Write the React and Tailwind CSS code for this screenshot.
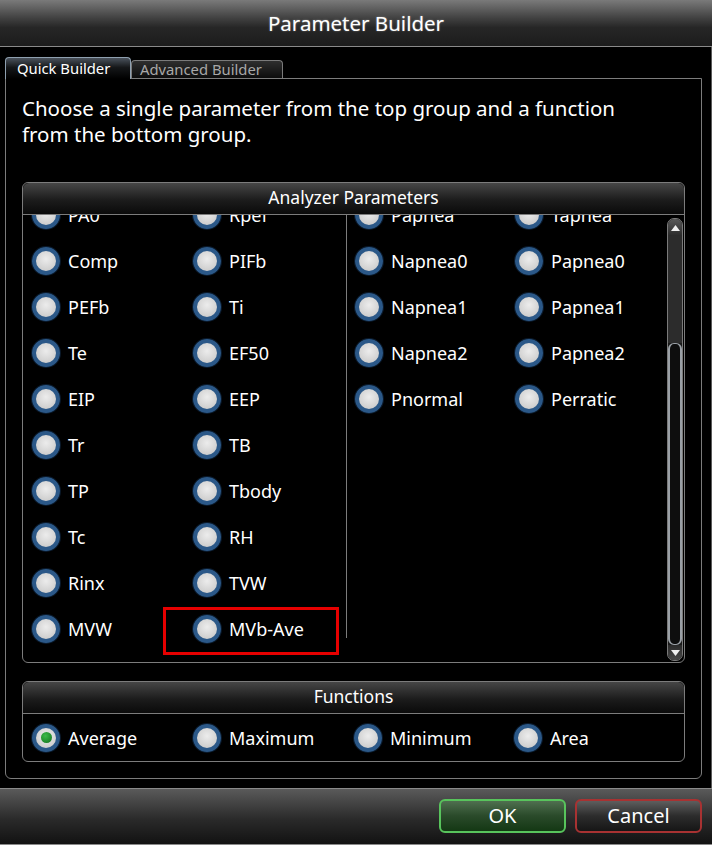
import React from "react";

const leftRows = [
  ["PA0", "Rpef"],
  ["Comp", "PIFb"],
  ["PEFb", "Ti"],
  ["Te", "EF50"],
  ["EIP", "EEP"],
  ["Tr", "TB"],
  ["TP", "Tbody"],
  ["Tc", "RH"],
  ["Rinx", "TVW"],
  ["MVW", "MVb-Ave"],
];

const rightRows = [
  ["Papnea", "Tapnea"],
  ["Napnea0", "Papnea0"],
  ["Napnea1", "Papnea1"],
  ["Napnea2", "Papnea2"],
  ["Pnormal", "Perratic"],
];

function Radio({ checked }) {
  return (
    <span className="w-[28px] h-[28px] shrink-0 rounded-full border-[4px] border-[#2b5888] bg-[radial-gradient(circle_at_50%_40%,#ececec,#c4c4c4)] shadow-[0_0_0_1px_#0a1a2c] flex items-center justify-center">
      {checked && <span className="w-[11px] h-[11px] rounded-full bg-[radial-gradient(circle_at_40%_35%,#3dbb4a,#10701c)]" />}
    </span>
  );
}

function Item({ label, checked, w = "w-[161px]" }) {
  return (
    <div className={`flex items-center gap-[8px] h-[46px] ${w} shrink-0`}>
      <Radio checked={checked} />
      <span className="text-[18px] leading-none text-white whitespace-nowrap">{label}</span>
    </div>
  );
}

function GroupHeader({ children }) {
  return (
    <div className="h-[32px] shrink-0 flex items-center justify-center pb-[2px] border-b border-[#7c7c7c] bg-[linear-gradient(to_bottom,#464646,#1c1c1c_55%,#0a0a0a)] rounded-t-[6px] text-[17.5px] text-white">
      {children}
    </div>
  );
}

function ScrollBar() {
  return (
    <div className="w-[16px] mt-[3px] mb-[1px] mr-px shrink-0 rounded-[7px] border border-[#7a7a7a] bg-[#1a1a1a] flex flex-col overflow-hidden">
      <div className="h-[17px] shrink-0 flex items-center justify-center bg-[linear-gradient(to_bottom,#5a5a5a,#2a2a2a)]">
        <svg width="9" height="6" viewBox="0 0 9 6"><path d="M4.5 0 L9 6 L0 6 Z" fill="#f0f0f0" /></svg>
      </div>
      <div className="h-[107px] shrink-0 bg-[#2c2c2c]" />
      <div className="flex-1 rounded-[6px] border-x-[2px] border-y border-[#9aa0a6] bg-[#0e0e0e]" />
      <div className="h-[15px] shrink-0 flex items-center justify-center bg-[linear-gradient(to_bottom,#2a2a2a,#4a4a4a)]">
        <svg width="9" height="6" viewBox="0 0 9 6"><path d="M0 0 L9 0 L4.5 6 Z" fill="#f0f0f0" /></svg>
      </div>
    </div>
  );
}

export default function App() {
  return (
    <div className="w-[712px] h-[845px] bg-black flex flex-col overflow-hidden font-['Noto_Sans',sans-serif] text-white">
      {/* Title bar */}
      <div className="h-[47px] shrink-0 border-b border-[#8a8a8a] bg-[linear-gradient(to_bottom,#7a7a7a,#404040_40%,#262626_60%,#1c1c1c)] flex items-center justify-center">
        <span className="text-[20.5px] text-white [text-shadow:0_0_2px_rgba(255,255,255,0.4)]">Parameter Builder</span>
      </div>

      {/* Body */}
      <div className="flex-1 flex border-r border-[#5a5a5a]">
        <div className="w-[697px] ml-[5px] flex flex-col">
          {/* Tabs */}
          <div className="h-[31px] shrink-0 flex items-end">
            <div className="relative z-10 -mb-px w-[126px] h-[22px] rounded-t-[4px] border border-b-0 border-[#8fa0b0] bg-[linear-gradient(to_bottom,#4a525c,#151719_45%,#000)] flex items-center pl-[11px]">
              <span className="text-[14.8px] leading-none text-white">Quick Builder</span>
            </div>
            <div className="w-[152px] h-[18px] rounded-t-[4px] border border-b-0 border-[#7a7a7a] bg-[linear-gradient(to_bottom,#2e2e2e,#0c0c0c)] flex items-center pl-[8px]">
              <span className="text-[14.8px] leading-none text-[#a8a8a8]">Advanced Builder</span>
            </div>
          </div>

          {/* Panel */}
          <div className="h-[701px] shrink-0 border border-[#7c7c7c] rounded-b-[6px] px-[16px] pt-[16px] flex flex-col">
            <p className="w-[640px] text-[20.5px] leading-[26px] text-white m-0">
              Choose a single parameter from the top group and a function from the bottom group.
            </p>

            {/* Analyzer Parameters */}
            <div className="mt-[35px] h-[481px] shrink-0 border border-[#7c7c7c] rounded-[6px] flex flex-col">
              <GroupHeader>Analyzer Parameters</GroupHeader>
              <div className="relative flex-1 flex min-h-0">
                <div className="w-[323px] shrink-0 overflow-hidden pl-[9px]">
                  <div className="-mt-[23px] flex flex-col">
                    {leftRows.map(([a, b]) => (
                      <div key={a} className="flex">
                        <Item label={a} />
                        <Item label={b} />
                      </div>
                    ))}
                  </div>
                </div>
                <div className="w-px h-[423px] shrink-0 bg-[#7c7c7c]" />
                <div className="flex-1 overflow-hidden pl-[8px]">
                  <div className="-mt-[23px] flex flex-col">
                    {rightRows.map(([a, b]) => (
                      <div key={a} className="flex">
                        <Item label={a} w="w-[160px]" />
                        <Item label={b} w="w-[140px]" />
                      </div>
                    ))}
                  </div>
                </div>
                <ScrollBar />
                <div className="absolute left-[140px] top-[392px] w-[176px] h-[48px] border-[3px] border-[#e60000]" />
              </div>
            </div>

            {/* Functions */}
            <div className="mt-[18px] h-[81px] shrink-0 border border-[#7c7c7c] rounded-[6px] flex flex-col">
              <GroupHeader>Functions</GroupHeader>
              <div className="flex-1 flex items-center pl-[9px]">
                <Item label="Average" checked />
                <Item label="Maximum" />
                <Item label="Minimum" w="w-[160px]" />
                <Item label="Area" w="w-[140px]" />
              </div>
            </div>
          </div>
        </div>
      </div>

      {/* Bottom bar */}
      <div className="h-[57px] shrink-0 border-t border-b border-[#8a8a8a] bg-[linear-gradient(to_bottom,#5a5a5a,#2a2a2a_55%,#121212)] flex items-start justify-end pt-[10px] pr-[10px] gap-[9px]">
        <button className="w-[127px] h-[34px] rounded-[6px] border-2 border-[#58c45c] bg-[linear-gradient(to_bottom,#4f6f4f,#2a4a2a_50%,#143814)] text-[20px] leading-none text-white flex items-center justify-center">
          OK
        </button>
        <button className="w-[127px] h-[34px] rounded-[6px] border-2 border-[#a83232] bg-[linear-gradient(to_bottom,#5e5e5e,#2c2c2c_50%,#161616)] text-[20px] leading-none text-white flex items-center justify-center">
          Cancel
        </button>
      </div>
    </div>
  );
}
